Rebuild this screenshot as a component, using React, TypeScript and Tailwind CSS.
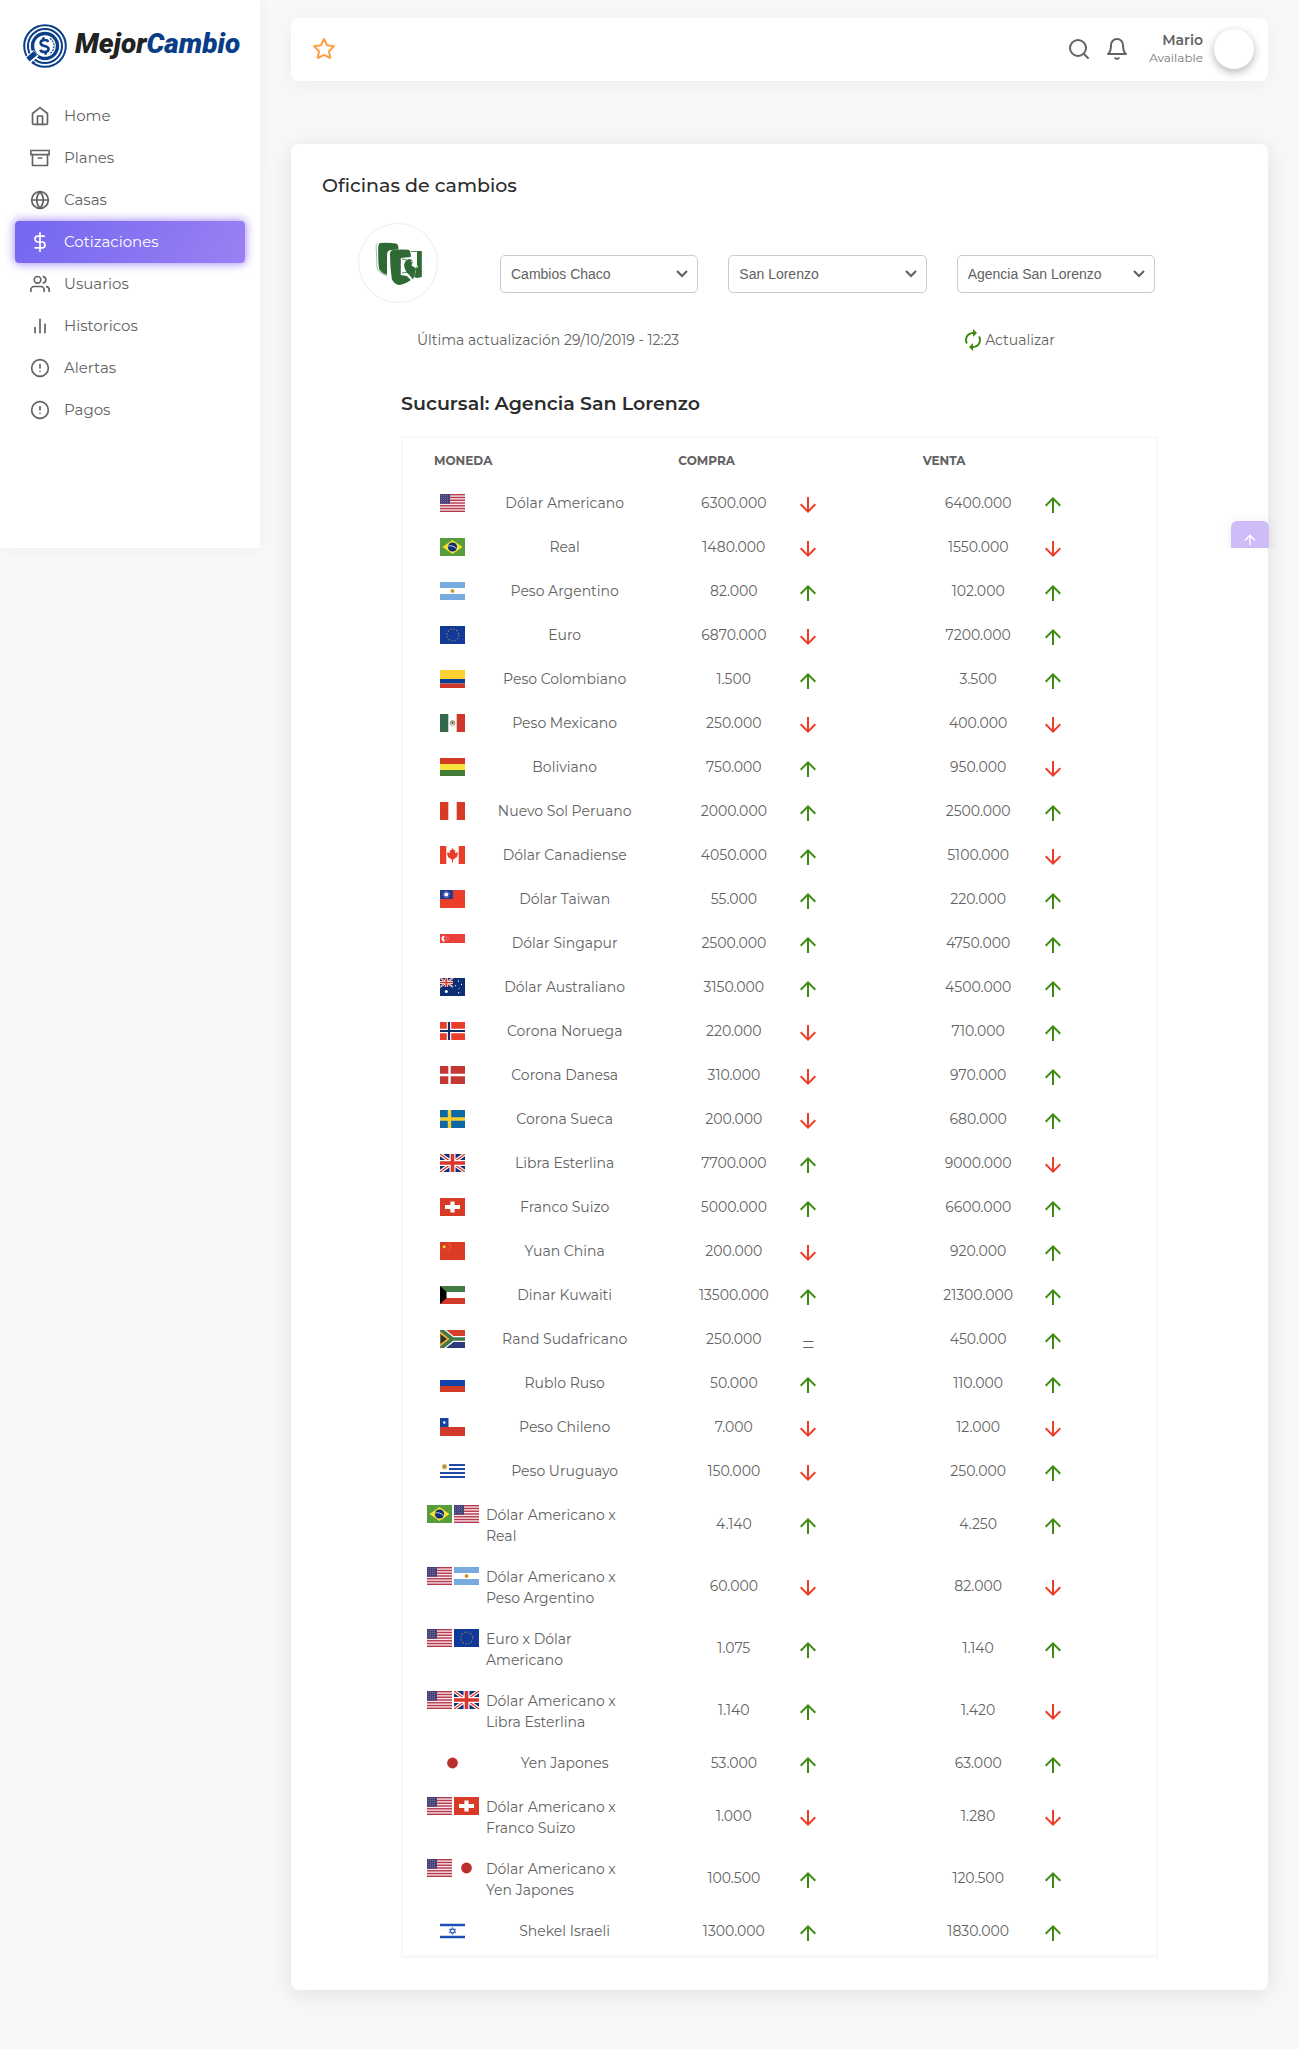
import type { ReactNode } from "react";
import {
  FiAlertCircle,
  FiArchive,
  FiArrowUp,
  FiBarChart2,
  FiBell,
  FiDollarSign,
  FiGlobe,
  FiHome,
  FiSearch,
  FiStar,
  FiUsers,
} from "react-icons/fi";
import { MdArrowDownward, MdArrowUpward, MdAutorenew } from "react-icons/md";

type Trend = "up" | "down" | "same";
type Row = [flags: string[], name: string, buy: string, buyTrend: Trend, sell: string, sellTrend: Trend];

const rows: Row[] = [
  [["us"], "Dólar Americano", "6300.000", "down", "6400.000", "up"],
  [["br"], "Real", "1480.000", "down", "1550.000", "down"],
  [["ar"], "Peso Argentino", "82.000", "up", "102.000", "up"],
  [["eu"], "Euro", "6870.000", "down", "7200.000", "up"],
  [["co"], "Peso Colombiano", "1.500", "up", "3.500", "up"],
  [["mx"], "Peso Mexicano", "250.000", "down", "400.000", "down"],
  [["bo"], "Boliviano", "750.000", "up", "950.000", "down"],
  [["pe"], "Nuevo Sol Peruano", "2000.000", "up", "2500.000", "up"],
  [["ca"], "Dólar Canadiense", "4050.000", "up", "5100.000", "down"],
  [["tw"], "Dólar Taiwan", "55.000", "up", "220.000", "up"],
  [["sg"], "Dólar Singapur", "2500.000", "up", "4750.000", "up"],
  [["au"], "Dólar Australiano", "3150.000", "up", "4500.000", "up"],
  [["no"], "Corona Noruega", "220.000", "down", "710.000", "up"],
  [["dk"], "Corona Danesa", "310.000", "down", "970.000", "up"],
  [["se"], "Corona Sueca", "200.000", "down", "680.000", "up"],
  [["gb"], "Libra Esterlina", "7700.000", "up", "9000.000", "down"],
  [["ch"], "Franco Suizo", "5000.000", "up", "6600.000", "up"],
  [["cn"], "Yuan China", "200.000", "down", "920.000", "up"],
  [["kw"], "Dinar Kuwaiti", "13500.000", "up", "21300.000", "up"],
  [["za"], "Rand Sudafricano", "250.000", "same", "450.000", "up"],
  [["ru"], "Rublo Ruso", "50.000", "up", "110.000", "up"],
  [["cl"], "Peso Chileno", "7.000", "down", "12.000", "down"],
  [["uy"], "Peso Uruguayo", "150.000", "down", "250.000", "up"],
  [["br", "us"], "Dólar Americano x Real", "4.140", "up", "4.250", "up"],
  [["us", "ar"], "Dólar Americano x Peso Argentino", "60.000", "down", "82.000", "down"],
  [["us", "eu"], "Euro x Dólar Americano", "1.075", "up", "1.140", "up"],
  [["us", "gb"], "Dólar Americano x Libra Esterlina", "1.140", "up", "1.420", "down"],
  [["jp"], "Yen Japones", "53.000", "up", "63.000", "up"],
  [["us", "ch"], "Dólar Americano x Franco Suizo", "1.000", "down", "1.280", "down"],
  [["us", "jp"], "Dólar Americano x Yen Japones", "100.500", "up", "120.500", "up"],
  [["il"], "Shekel Israeli", "1300.000", "up", "1830.000", "up"],
];

const stripes = (colors: string[], heights?: number[]) => {
  let y = 0;
  return colors.map((c, i) => {
    const h = heights ? heights[i] : 18 / colors.length;
    const el = <rect key={i} y={y} width="25" height={h} fill={c} />;
    y += h;
    return el;
  });
};

const unionJack = (
  <>
    <path d="M0 0h25v18H0z" fill="#0f2f78" />
    <path d="M0 0l25 18M25 0L0 18" stroke="#fff" strokeWidth="3.6" />
    <path d="M0 0l25 18M25 0L0 18" stroke="#d8372c" strokeWidth="1.3" />
    <path d="M12.5 0v18M0 9h25" stroke="#fff" strokeWidth="6" />
    <path d="M12.5 0v18M0 9h25" stroke="#d8372c" strokeWidth="3.6" />
  </>
);

const flagArt: Record<string, ReactNode> = {
  us: (
    <>
      <path d="M0 0h25v18H0z" fill="#f4e6ea" />
      {[0, 1, 2, 3, 4, 5, 6].map((i) => (
        <rect key={i} y={i * 2.77} width="25" height="1.4" fill="#b8384b" />
      ))}
      <path d="M0 0h10v9.7H0z" fill="#454277" />
      <path d="M1 1.5h8M1 3.5h8M1 5.5h8M1 7.5h8" stroke="#7d7ba3" strokeWidth=".8" strokeDasharray="1 1" />
    </>
  ),
  br: (
    <>
      <path d="M0 0h25v18H0z" fill="#579d3c" />
      <path d="M12.5 2L22.5 9l-10 7-10-7z" fill="#f8e034" />
      <circle cx="12.5" cy="9" r="4.6" fill="#102e79" />
      <path d="M8.2 8c3-.8 6 .2 8.400 2.600" stroke="#fff" strokeWidth=".8" fill="none" />
    </>
  ),
  ar: (
    <>
      {stripes(["#77aadf", "#fff", "#77aadf"])}
      <circle cx="12.5" cy="9" r="2.1" fill="#dfa747" />
      <circle cx="12.5" cy="9" r="1" fill="#bf8132" />
    </>
  ),
  eu: (
    <>
      <path d="M0 0h25v18H0z" fill="#113a98" />
      <circle cx="12.800" cy="9" r="6" fill="none" stroke="#998759" strokeWidth="1.200" strokeDasharray="1.200 1.940" />
    </>
  ),
  co: stripes(["#fdd131", "#0c3e98", "#cf3728"], [9, 4.5, 4.5]),
  mx: (
    <>
      <path d="M0 0h25v18H0z" fill="#fff" />
      <path d="M0 0h8.300v18H0z" fill="#33684a" />
      <path d="M16.700 0H25v18h-8.300z" fill="#cf3728" />
      <circle cx="12.5" cy="9" r="2.4" fill="none" stroke="#8b8f68" />
      <path d="M11.500 7.500h2v2.500h-2z" fill="#6c4b35" />
    </>
  ),
  bo: stripes(["#d53a25", "#f8e43a", "#427b35"]),
  pe: (
    <>
      <path d="M0 0h25v18H0z" fill="#fff" />
      <path d="M0 0h8.300v18H0zM16.700 0H25v18h-8.300z" fill="#d73a25" />
    </>
  ),
  ca: (
    <>
      <path d="M0 0h25v18H0z" fill="#fff" />
      <path d="M0 0h6.300v18H0zM18.700 0H25v18h-6.300z" fill="#ea3e2a" />
      <path d="M12.500 2l1.500 2.600 1.400-.6-.4 3.300 2.500-1.200.3 1.800-.8 3.200-3.800 2.300-.4 3.300h-.6l-.4-3.300L8 11.100l-.8-3.200.3-1.800L10 7.300 9.600 4l1.400.6z" fill="#e63d29" />
    </>
  ),
  tw: (
    <>
      <path d="M0 0h25v18H0z" fill="#ea3e2a" />
      <path d="M0 0h13v9H0z" fill="#243a93" />
      <circle cx="6.300" cy="4.500" r="2" fill="#fff" />
      <circle cx="6.300" cy="4.500" r="2.900" fill="none" stroke="#fff" strokeWidth=".7" strokeDasharray=".7 .8" />
    </>
  ),
  sg: (
    <>
      {stripes(["#eb4039", "#fff"])}
      <path d="M5.200 1.800a2.900 2.900 0 1 0 0 5.500 3.200 3.200 0 0 1 0-5.500z" fill="#fff" />
      <circle cx="6.800" cy="4.500" r="1.600" fill="none" stroke="#f5a49f" strokeWidth=".8" strokeDasharray=".9 .7" />
    </>
  ),
  au: (
    <>
      <path d="M0 0h25v18H0z" fill="#0b2e75" />
      <path d="M0 0l13 9M13 0L0 9" stroke="#fff" strokeWidth="1.800" />
      <path d="M0 0l13 9M13 0L0 9" stroke="#d8372c" strokeWidth=".8" />
      <path d="M6.300 0v9M0 4.500h13" stroke="#fff" strokeWidth="3" />
      <path d="M6.300 0v9M0 4.500h13" stroke="#d8372c" strokeWidth="1.700" />
      <circle cx="6.300" cy="13.500" r="1.500" fill="#fff" />
      <path d="M18.500 2.500v1.200M21.500 5.800v1.200M15.600 7v1.200M19 9.800v.8M18.700 14v1.500" stroke="#fff" />
    </>
  ),
  no: (
    <>
      <path d="M0 0h25v18H0z" fill="#ea3e2a" />
      <path d="M9 0v18M0 9h25" stroke="#fff" strokeWidth="4.500" />
      <path d="M9 0v18M0 9h25" stroke="#0f2f66" strokeWidth="2.200" />
    </>
  ),
  dk: (
    <>
      <path d="M0 0h25v18H0z" fill="#c43734" />
      <path d="M9.500 0v18M0 9h25" stroke="#fff" strokeWidth="2.400" />
    </>
  ),
  se: (
    <>
      <path d="M0 0h25v18H0z" fill="#0e68a5" />
      <path d="M9.500 0v18M0 9h25" stroke="#f9cd30" strokeWidth="3.400" />
    </>
  ),
  gb: unionJack,
  ch: (
    <>
      <path d="M0 0h25v18H0z" fill="#d73a25" />
      <path d="M12.500 3.500v11M5 9h15" stroke="#fff" strokeWidth="4.200" />
    </>
  ),
  cn: (
    <>
      <path d="M0 0h25v18H0z" fill="#dc3c25" />
      <path d="M4.200 2.500l.6 1.400 1.500.1-1.100 1 .4 1.500-1.400-.8-1.400.8.400-1.500-1.100-1 1.500-.1z" fill="#fbdf35" />
      <path d="M8.500 1.500h1M9.800 3.500h1M9.800 6h1M8.500 8h1" stroke="#e8913a" />
    </>
  ),
  kw: (
    <>
      {stripes(["#427b43", "#fff", "#d13a2a"])}
      <path d="M0 0l6.500 6v6L0 18z" fill="#000" />
    </>
  ),
  za: (
    <>
      {stripes(["#d73f2d", "#2b3b7c"])}
      <path d="M0-1L12.500 9 0 19M12.500 9H25" stroke="#fff" strokeWidth="6" fill="none" />
      <path d="M0 0v18L11 9z" fill="#f1b233" />
      <path d="M0-1L12.500 9 0 19M12.500 9H25" stroke="#417a48" strokeWidth="3.600" fill="none" />
      <path d="M0 3.300v11.400L7.500 9z" fill="#30302e" stroke="#f1b233" strokeWidth=".9" />
    </>
  ),
  ru: stripes(["#fff", "#1144a6", "#d13a25"]),
  cl: (
    <>
      {stripes(["#fff", "#d13a2a"])}
      <path d="M0 0h8.500v9H0z" fill="#1144a0" />
      <circle cx="4.300" cy="4.500" r="1.200" fill="#fff" />
    </>
  ),
  uy: (
    <>
      <path d="M0 0h25v18H0z" fill="#fff" />
      <path d="M9 3h16M9 7h16M0 11h25M0 15h25" stroke="#2148a4" strokeWidth="1.900" />
      <circle cx="4.500" cy="4.700" r="2.600" fill="#cfb35c" />
      <circle cx="4.500" cy="4.700" r="1.400" fill="#a98d33" />
    </>
  ),
  jp: (
    <>
      <path d="M0 0h25v18H0z" fill="#fff" />
      <circle cx="12.500" cy="9" r="5.400" fill="#ba302d" />
    </>
  ),
  il: (
    <>
      <path d="M0 0h25v18H0z" fill="#fff" />
      <path d="M0 3h25M0 15h25" stroke="#1c4fb8" strokeWidth="2.400" />
      <path d="M12.500 5.500l3.100 5.200H9.400zM12.500 12.500L9.400 7.300h6.200z" fill="none" stroke="#2a55ba" strokeWidth=".9" />
    </>
  ),
};

function Flag({ code }: { code: string }) {
  return (
    <svg viewBox="0 0 25 18" className="h-[18px] w-[25px] shrink-0" aria-hidden="true">
      {flagArt[code]}
    </svg>
  );
}

function TrendMark({ trend }: { trend: Trend }) {
  if (trend === "up") return <MdArrowUpward className="mt-1 size-6 text-[#3f8a12]" aria-label="Sube" />;
  if (trend === "down") return <MdArrowDownward className="mt-1 size-6 text-[#ef3b24]" aria-label="Baja" />;
  return <span className="mt-3 w-6 text-center text-2xl font-light leading-6">=</span>;
}

function Amount({ value, trend }: { value: string; trend: Trend }) {
  return (
    <td className="h-11 px-3.5 py-0 align-middle">
      <div className="flex h-7 items-center">
        <span className="w-[125px] text-center">{value}</span>
        <TrendMark trend={trend} />
      </div>
    </td>
  );
}

const menu = [
  { label: "Home", Icon: FiHome },
  { label: "Planes", Icon: FiArchive },
  { label: "Casas", Icon: FiGlobe },
  { label: "Cotizaciones", Icon: FiDollarSign, active: true },
  { label: "Usuarios", Icon: FiUsers },
  { label: "Historicos", Icon: FiBarChart2 },
  { label: "Alertas", Icon: FiAlertCircle },
  { label: "Pagos", Icon: FiAlertCircle },
];

function BrandMark() {
  return (
    <svg viewBox="0 0 44 44" className="size-11" fill="none" stroke="#0b3f8a" aria-hidden="true">
      <circle cx="22" cy="22" r="20.800" strokeWidth="2" />
      <circle cx="22" cy="22" r="17" strokeWidth="2" />
      <circle cx="22" cy="22" r="12.500" strokeWidth="3.400" />
      <path d="M3 38l10-9" stroke="#fff" strokeWidth="8" />
      <path d="M5 35.500l7.500-6.500" strokeWidth="5" />
      <path d="M9.500 37.500A20 20 0 0 0 12 39.500" strokeWidth="2" />
      <path d="M25.500 17.800c-.8-1.400-2-1.800-4-1.800-2.400 0-3.900 1-3.900 2.900 0 4.400 8 1.800 8 6.200 0 2-1.600 3-4.100 3-2.200 0-3.600-.7-4.300-2.200M20.500 13.300v3M22.700 27.800v3" strokeWidth="2.500" />
      <path d="M27 14.500a9 9 0 0 1 0 15" strokeWidth="1.200" strokeDasharray="2 1" />
    </svg>
  );
}

function ChacoLogo() {
  return (
    <svg viewBox="0 0 80 80" className="size-20 shrink-0" role="img" aria-label="Cambios Chaco">
      <circle cx="40" cy="40" r="39.500" fill="#fff" stroke="#ededed" />
      <path d="M20 20.500c-2 .5-1.900 2-1.700 6L19 44q.2 4 4 6l6 3" fill="none" stroke="#8fb097" strokeWidth=".8" />
      <path d="M22 20q9-.6 16 .6 2.500.5 2.500 6l-9 .6q-2.400 1-2.500 4V52q-5-1.500-7.500-5-1.500-4-1.300-22 0-4 1.800-5z" fill="#2f6933" />
      <path d="M34 27.200q8-1.400 16.500-.4 2.500.8 2.300 7.200l-10 1v17l6 1 4 4q-6 4.500-12 5-5-1-7-6-1.800-12-1.800-25.300 0-3 2-3.500z" fill="#2f6933" />
      <path d="M30.500 29l.8 24q.8 4 4 7" fill="none" stroke="#fff" strokeWidth="1.200" />
      <path d="M46 42q1-5.500 6-6l3 2-1.500 4.500 4.500 3-1 5-2 6-4-5q-4-2.500-5-9.500z" fill="#2f6933" />
      <path d="M59 28h4.800v26l-4.800 1-3-1 2-6-1.500-3.500L59 43z" fill="#2f6933" />
      <path d="M53 28.500h6M44 36l5 1M44 50l6-1M53 46l4 1" fill="none" stroke="#2f6933" strokeWidth=".8" />
      <path d="M53 39l3-2v4l4 2.500-3 1.500" fill="none" stroke="#fff" strokeWidth="1" />
    </svg>
  );
}

function Picker({ label, value }: { label: string; value: string }) {
  return (
    <div className="relative flex-1">
      <select
        aria-label={label}
        defaultValue={value}
        className="h-[38px] w-full appearance-none rounded-[5px] border border-[#ccc] bg-white pl-2.5 pr-8 font-['Liberation_Sans',sans-serif] text-sm text-[#626262]"
      >
        <option>{value}</option>
      </select>
      <svg viewBox="0 0 12 8" className="pointer-events-none absolute right-2.5 top-[15px] h-2 w-3" aria-hidden="true">
        <path d="M1 1l5 5 5-5" fill="none" stroke="#5f5f5f" strokeWidth="2" />
      </svg>
    </div>
  );
}

export default function App() {
  return (
    <div className="relative flex min-h-screen items-start bg-[#f8f8f8] pb-[58px] font-['Montserrat','Inter',sans-serif] text-sm font-normal text-[#626262]">
      <aside className="h-[548px] w-[260px] shrink-0 bg-white shadow-[0_0_15px_rgba(0,0,0,0.05)]">
        <a href="#home" className="flex items-center gap-2 pl-[23px] pt-6">
          <BrandMark />
          <span className="pb-1 font-['Roboto',sans-serif] text-[28px] font-black italic leading-9 text-[#222]">
            Mejor<span className="text-[#083d87]">Cambio</span>
          </span>
        </a>
        <nav className="mt-[27px] flex flex-col px-[15px]">
          {menu.map(({ label, Icon, active }) => (
            <a
              key={label}
              href={`#${label.toLowerCase()}`}
              className={
                active
                  ? "flex h-[42px] items-center gap-3.5 rounded bg-linear-[118deg,#7367f0,#9a80f3] pl-[15px] text-[15px] text-white shadow-[0_0_10px_1px_rgba(132,94,245,0.7)]"
                  : "flex h-[42px] items-center gap-3.5 pl-[15px] text-[15px]"
              }
            >
              <Icon className="size-5" />
              {label}
            </a>
          ))}
        </nav>
      </aside>

      <main className="min-w-0 flex-1 pl-[31px] pr-[31px] pt-[18px]">
        <header className="flex h-[63px] items-center rounded-lg bg-white pb-0.5 pl-[21px] pr-[14px] shadow-[0_4px_20px_rgba(0,0,0,0.05)]">
          <button type="button" aria-label="Favoritos" className="text-[#ff9f43]">
            <FiStar className="size-6" />
          </button>
          <div className="ml-auto flex items-center">
            <button type="button" aria-label="Buscar" className="mr-3.5">
              <FiSearch className="size-6" />
            </button>
            <button type="button" aria-label="Notificaciones" className="mr-5">
              <FiBell className="size-6" />
            </button>
            <div className="mr-[11px] text-right">
              <p className="text-sm font-semibold leading-[18px]">Mario</p>
              <p className="text-xs font-normal leading-[18px] text-[#777]">Available</p>
            </div>
            <span className="size-10 rounded-full bg-white shadow-[0_3px_8px_rgba(0,0,0,0.3)]" />
          </div>
        </header>

        <section className="mt-[63px] rounded-lg bg-white px-[31px] pb-8 pt-[29px] shadow-[0_4px_25px_rgba(0,0,0,0.1)]">
          <h1 className="text-[19px] font-medium leading-[26px] text-[#2c2c2c]">Oficinas de cambios</h1>

          <div className="mt-6 flex items-center gap-[62px] pl-9 pr-[82px]">
            <ChacoLogo />
            <div className="mt-[22px] flex flex-1 gap-[30px]">
              <Picker label="Casa de cambio" value="Cambios Chaco" />
              <Picker label="Ciudad" value="San Lorenzo" />
              <Picker label="Sucursal" value="Agencia San Lorenzo" />
            </div>
          </div>

          <div className="mt-[25px] flex h-6 items-center justify-between pl-[95px] pr-[182px]">
            <p>Última actualización 29/10/2019 - 12:23</p>
            <button type="button" className="flex items-center">
              <MdAutorenew className="size-6 text-[#3f8a12]" />
              Actualizar
            </button>
          </div>

          <h2 className="mt-10 pl-[79px] text-[19px] font-semibold leading-6 text-[#2c2c2c]">
            Sucursal: Agencia San Lorenzo
          </h2>

          <div className="mx-[79px] mt-5 border-2 border-b-3 border-[#f8f8f8] px-2.5 pb-0.5">
            <table className="w-full table-fixed border-collapse">
              <thead>
                <tr className="text-left text-xs font-bold">
                  <th className="h-[43px] pl-[21px] pt-0.5">MONEDA</th>
                  <th className="pl-[21px] pt-0.5">COMPRA</th>
                  <th className="pl-[21px] pt-0.5">VENTA</th>
                </tr>
              </thead>
              <tbody>
                {rows.map(([flags, name, buy, buyTrend, sell, sellTrend]) => (
                  <tr key={name}>
                    <td className="px-3.5 py-0">
                      <div className={flags.length > 1 ? "flex gap-[7px] py-2.5" : "flex items-center gap-[7px]"}>
                        <span className={flags.length > 1 ? "mt-0.5 flex w-[52px] shrink-0 gap-0.5" : "flex w-[52px] shrink-0 justify-center pr-0.5"}>
                          {flags.map((f) => (
                            <Flag key={f} code={f} />
                          ))}
                        </span>
                        <span className={flags.length > 1 ? "-mb-0.5 flex-1 pt-0.5 leading-[21px]" : "flex-1 pt-px text-center leading-[21px]"}>{name}</span>
                      </div>
                    </td>
                    <Amount value={buy} trend={buyTrend} />
                    <Amount value={sell} trend={sellTrend} />
                  </tr>
                ))}
              </tbody>
            </table>
          </div>
        </section>
      </main>

      <div className="absolute right-0 top-[505px] h-[43px] w-[90px] overflow-hidden">
        <button
          type="button"
          aria-label="Volver arriba"
          className="ml-[22px] mt-4 flex size-[38px] items-center justify-center rounded-md bg-[#cebcf9] text-white shadow-[0_0_12px_rgba(0,0,0,0.08)]"
        >
          <FiArrowUp className="size-4" />
        </button>
      </div>
    </div>
  );
}
